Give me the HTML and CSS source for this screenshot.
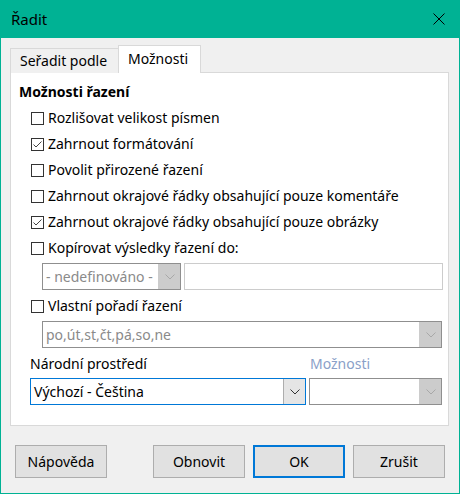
FILE: index.html
```html
<!DOCTYPE html>
<html lang="cs">
<head>
<meta charset="utf-8">
<title>Řadit</title>
<link rel="stylesheet" href="styles.css">
</head>
<body>
<div class="win">
  <div class="titlebar">
    <span class="title">Řadit</span>
    <svg class="close" width="12" height="12" viewBox="0 0 12 12"><path d="M0.5 0.5 L11.5 11.5 M11.5 0.5 L0.5 11.5" stroke="#000" stroke-width="1" fill="none"/></svg>
  </div>
  <div class="body">
    <div class="tabs">
      <div class="tab">Seřadit podle</div>
      <div class="tab active">Možnosti</div>
    </div>
    <div class="panel">
      <div class="heading">Možnosti řazení</div>
      <div class="cb"><span class="box"></span><span>Rozlišovat velikost písmen</span></div>
      <div class="cb"><span class="box checked"><svg width="11" height="11" viewBox="0 0 11 11"><path d="M1.5 5.5 L4 8 L9.5 2.5" stroke="#444" stroke-width="1" fill="none"/></svg></span><span>Zahrnout formátování</span></div>
      <div class="cb"><span class="box"></span><span>Povolit přirozené řazení</span></div>
      <div class="cb"><span class="box"></span><span>Zahrnout okrajové řádky obsahující pouze komentáře</span></div>
      <div class="cb"><span class="box checked"><svg width="11" height="11" viewBox="0 0 11 11"><path d="M1.5 5.5 L4 8 L9.5 2.5" stroke="#444" stroke-width="1" fill="none"/></svg></span><span>Zahrnout okrajové řádky obsahující pouze obrázky</span></div>
      <div class="cb"><span class="box"></span><span>Kopírovat výsledky řazení do:</span></div>
      <div class="copyrow">
        <div class="combo disabled small">
          <span class="val">- nedefinováno -</span>
          <span class="btn"><svg width="10" height="6" viewBox="0 0 10 6"><path d="M0.5 0.5 L5 5 L9.5 0.5" stroke="#a8a8a8" fill="none"/></svg></span>
        </div>
        <div class="field"></div>
      </div>
      <div class="cb"><span class="box"></span><span>Vlastní pořadí řazení</span></div>
      <div class="combo disabled wide">
        <span class="val">po,út,st,čt,pá,so,ne</span>
        <span class="btn"><svg width="10" height="6" viewBox="0 0 10 6"><path d="M0.5 0.5 L5 5 L9.5 0.5" stroke="#a8a8a8" fill="none"/></svg></span>
      </div>
      <div class="locale">
        <div class="col col-main">
          <div class="lbl">Národní prostředí</div>
          <div class="combo focus">
            <span class="val">Výchozí - Čeština</span>
            <span class="btn"><svg width="10" height="6" viewBox="0 0 10 6"><path d="M0.5 0.5 L5 5 L9.5 0.5" stroke="#333" fill="none"/></svg></span>
          </div>
        </div>
        <div class="col col-opt">
          <div class="lbl dim">Možnosti</div>
          <div class="combo disabled">
            <span class="val"></span>
            <span class="btn"><svg width="10" height="6" viewBox="0 0 10 6"><path d="M0.5 0.5 L5 5 L9.5 0.5" stroke="#a8a8a8" fill="none"/></svg></span>
          </div>
        </div>
      </div>
    </div>
    <div class="buttons">
      <div class="button">Nápověda</div>
      <div class="spacer"></div>
      <div class="button">Obnovit</div>
      <div class="button default">OK</div>
      <div class="button">Zrušit</div>
    </div>
  </div>
</div>
</body>
</html>
```

FILE: styles.css
```css
html, body {
  margin: 0;
  padding: 0;
  background: #f0f0f0;
}
body {
  font-family: "Noto Sans", "Open Sans", sans-serif;
  font-size: 14px;
  color: #000;
}
.win {
  width: 460px;
  height: 494px;
  display: flex;
  flex-direction: column;
  background: #f0f0f0;
}
.titlebar {
  height: 38px;
  background: #00b294;
  display: flex;
  align-items: center;
  justify-content: space-between;
  padding: 0 15px 0 11px;
  flex: none;
}
.title {
  font-size: 15px;
  line-height: 20px;
  margin-top: -1px;
}
.close {
  display: block;
}
.body {
  flex: 1;
  border: 1px solid #00b294;
  border-top: none;
  padding: 8px 10px 0 9px;
  display: flex;
  flex-direction: column;
}
.tabs {
  display: flex;
  align-items: flex-end;
  height: 27px;
  position: relative;
  z-index: 1;
  margin-bottom: -1px;
}
.tab {
  box-sizing: border-box;
  height: 25px;
  border: 1px solid #d9d9d9;
  border-bottom: none;
  padding: 0 9px 0 9px;
  display: flex;
  align-items: center;
  background: #f0f0f0;
  line-height: 20px;
}
.tab:first-child {
  width: 109px;
}
.tab.active {
  height: 28px;
  width: 83px;
  margin-left: -1px;
  background: #fff;
  padding-top: 0;
  padding-bottom: 2px;
}
.panel {
  box-sizing: border-box;
  height: 354px;
  background: #fff;
  border: 1px solid #d9d9d9;
  padding: 6px 0 0 8px;
}
.heading {
  font-weight: bold;
  height: 26px;
  line-height: 26px;
}
.cb {
  height: 26px;
  display: flex;
  align-items: center;
  padding-left: 12px;
  line-height: 20px;
}
.box {
  box-sizing: border-box;
  width: 13px;
  height: 13px;
  border: 1px solid #333;
  margin-right: 4px;
  display: flex;
  align-items: center;
  justify-content: center;
  flex: none;
}
.box svg {
  display: block;
}
.copyrow {
  display: flex;
  gap: 3px;
  padding-left: 23px;
  margin: 2px 0 3px;
}
.combo {
  box-sizing: border-box;
  height: 27px;
  border: 1px solid #7a7a7a;
  background: #fff;
  display: flex;
  align-items: stretch;
}
.combo .val {
  flex: 1;
  padding-left: 3px;
  line-height: 25px;
  white-space: nowrap;
  overflow: hidden;
}
.combo .btn {
  width: 21px;
  display: flex;
  align-items: center;
  justify-content: center;
  background: #e5e5e5;
  border-left: 1px solid #aaa;
}
.combo.disabled {
  border-color: #8f8f8f;
  color: #8a8a8a;
}
.combo.disabled .btn {
  background: #cccccc;
  border-left-color: #cccccc;
}
.combo.small {
  width: 139px;
}
.field {
  box-sizing: border-box;
  width: 259px;
  height: 27px;
  border: 1px solid #cccccc;
  background: #fff;
}
.combo.wide {
  width: 400px;
  margin: 2px 0 0 23px;
}
.combo.focus {
  border-color: #0078d7;
}
.combo.focus .btn {
  border-left-color: #adadad;
}
.locale {
  display: flex;
  gap: 3px;
  padding-left: 11px;
  margin-top: 5px;
}
.col {
  display: flex;
  flex-direction: column;
}
.col-main {
  width: 276px;
}
.col-opt {
  width: 133px;
}
.lbl {
  height: 25px;
  line-height: 22px;
}
.lbl.dim {
  color: #8aa0c8;
  padding-left: 1px;
}
.buttons {
  display: flex;
  gap: 8px;
  margin-top: 19px;
  padding-left: 5px;
}
.spacer {
  flex: none;
  width: 30px;
}
.button {
  box-sizing: border-box;
  width: 92px;
  height: 33px;
  border: 1px solid #adadad;
  background: #e1e1e1;
  display: flex;
  align-items: center;
  justify-content: center;
  line-height: 20px;
}
.button.default {
  border: 2px solid #0078d7;
}
```
